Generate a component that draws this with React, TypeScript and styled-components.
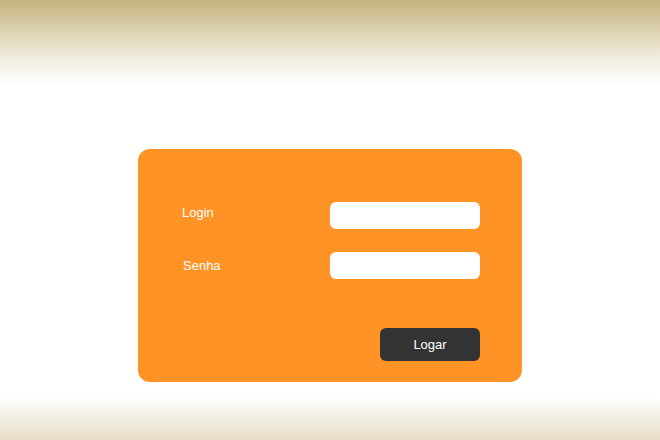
import React, { useState } from "react";
import styled, { createGlobalStyle } from "styled-components";

const GlobalStyle = createGlobalStyle`
  html, body {
    margin: 0;
    padding: 0;
    height: 100%;
  }
  body {
    font-family: "Liberation Sans", Arial, sans-serif;
    background:
      linear-gradient(to bottom, #c4b47f 0px, #e4dbc1 40px, #f1eee2 60px, #ffffff 86px, #ffffff 398px, #f4f1e6 415px, #e6ddc6 440px);
  }
  #root {
    height: 100%;
  }
`;

const Page = styled.div`
  height: 100%;
  display: flex;
  justify-content: center;
  padding-top: 149px;
  box-sizing: border-box;
`;

const Card = styled.form`
  width: 384px;
  height: 233px;
  box-sizing: border-box;
  background-color: #ff9326;
  border-radius: 12px;
  padding: 53px 42px 0 44px;
  display: flex;
  flex-direction: column;
`;

const Row = styled.div`
  display: flex;
  justify-content: space-between;
  align-items: flex-start;
  margin-bottom: 23px;
`;

const Label = styled.label<{ $indent?: number; $top?: number }>`
  color: #ffffff;
  font-size: 13px;
  line-height: 16px;
  padding-top: ${(p) => p.$top ?? 3}px;
  padding-left: ${(p) => p.$indent ?? 0}px;
`;

const Field = styled.input`
  width: 150px;
  height: 27px;
  box-sizing: border-box;
  border: none;
  border-radius: 6px;
  background: #ffffff;
  outline: none;
  padding: 0 8px;
  font-family: inherit;
  font-size: 13px;
`;

const Actions = styled.div`
  display: flex;
  justify-content: flex-end;
  margin-top: 26px;
`;

const SubmitBtn = styled.button`
  width: 100px;
  height: 33px;
  border: none;
  border-radius: 6px;
  background-color: #333333;
  color: #ffffff;
  font-family: inherit;
  font-size: 13px;
  cursor: pointer;
`;

function App() {
  const [login, setLogin] = useState("");
  const [senha, setSenha] = useState("");

  return (
    <Page>
      <GlobalStyle />
      <Card onSubmit={(e) => e.preventDefault()}>
        <Row>
          <Label htmlFor="login">Login</Label>
          <Field id="login" value={login} onChange={(e) => setLogin(e.target.value)} />
        </Row>
        <Row>
          <Label htmlFor="senha" $indent={1} $top={6}>
            Senha
          </Label>
          <Field
            id="senha"
            type="password"
            value={senha}
            onChange={(e) => setSenha(e.target.value)}
          />
        </Row>
        <Actions>
          <SubmitBtn type="submit">Logar</SubmitBtn>
        </Actions>
      </Card>
    </Page>
  );
}

export default App;
